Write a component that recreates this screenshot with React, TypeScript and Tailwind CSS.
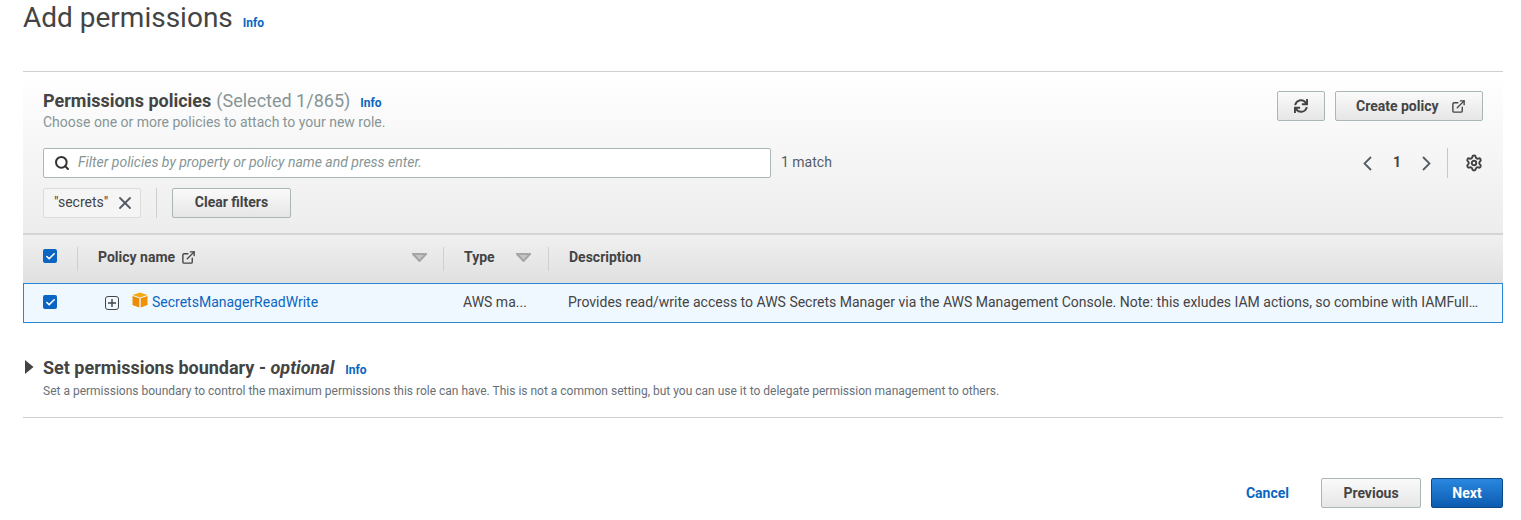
import { ExternalLink, Search, X, Settings, Check } from "lucide-react"
import { FaSync } from "react-icons/fa"

function Info() {
  return <span className="text-[12px] font-bold text-[#0a66c2] leading-none">Info</span>
}

function Checkbox() {
  return (
    <span className="w-[14px] h-[14px] rounded-[2px] bg-[#0a66c2] flex items-center justify-center">
      <Check className="w-[11px] h-[11px] text-white" strokeWidth={3.5} />
    </span>
  )
}

function SortCaret() {
  return (
    <svg width="15" height="9" viewBox="0 0 15 9">
      <path d="M1 1h13L7.5 8z" fill="#c4c4c4" stroke="#a6a6a6" strokeWidth="2" />
    </svg>
  )
}

function Cube() {
  return (
    <svg width="16" height="16" viewBox="0 0 16 16">
      <path d="M8 0.5 15.5 3 8 5.5 0.5 3z" fill="#f7a80d" />
      <path d="M0.5 4 7.3 6.3V15.5L0.5 13z" fill="#ec8b08" />
      <path d="M15.5 4 8.7 6.3V15.5L15.5 13z" fill="#f29100" />
    </svg>
  )
}

function Chevron({ d }: { d: string }) {
  return (
    <svg width="9" height="15" viewBox="0 0 9 15">
      <path d={d} fill="none" stroke="#545b64" strokeWidth="1.8" />
    </svg>
  )
}

export default function App() {
  const btn = "h-[30px] rounded-[2px] border border-[#aab7b8] bg-gradient-to-b from-[#fafafa] to-[#e6e6e6] text-[14px] font-bold text-[#444] flex items-center justify-center"

  return (
    <div className="h-[520px] w-[1521px] overflow-hidden bg-white pl-[23px] pr-[18px] text-[#444] font-['Roboto',sans-serif]">
      {/* Page title */}
      <div className="h-[71px] flex items-start gap-[10px]">
        <h1 className="text-[28px] leading-[36px] text-[#444]">Add permissions</h1>
        <span className="mt-[10px]"><Info /></span>
      </div>

      {/* Policies panel */}
      <div className="border-t border-[#cfcfcf]">
        <div className="h-[161px] bg-gradient-to-b from-white to-[#ededed] px-[20px] pt-[19px]">
          <div className="flex justify-between h-[57px]">
            <div>
              <div className="flex items-center h-[20px] -mt-px">
                <span className="text-[18px] font-bold text-[#444]">Permissions policies</span>
                <span className="text-[18px] text-[#879596] ml-[5px]">(Selected 1/865)</span>
                <span className="ml-[10px] mt-[3px]"><Info /></span>
              </div>
              <p className="text-[14px] leading-[20px] text-[#879596] mt-[2px]">Choose one or more policies to attach to your new role.</p>
            </div>
            <div className="flex gap-[10px]">
              <button className={`${btn} w-[48px]`}>
                <FaSync className="w-[14px] h-[14px]" />
              </button>
              <button className={`${btn} w-[148px] !justify-start pl-[20px] gap-[12px]`}>
                Create policy
                <ExternalLink className="w-[15px] h-[15px]" strokeWidth={2.2} />
              </button>
            </div>
          </div>

          <div className="flex items-center h-[30px]">
            <div className="w-[728px] h-[30px] rounded-[2px] border border-[#aab7b8] bg-white flex items-center pl-[10px] gap-[8px]">
              <Search className="w-[16px] h-[16px] text-[#333]" strokeWidth={3} />
              <span className="text-[14px] italic text-[#879596] mb-[1px]">Filter policies by property or policy name and press enter.</span>
            </div>
            <span className="text-[14px] text-[#545b64] ml-[10px] mb-[2px]">1 match</span>
            <div className="ml-auto flex items-center">
              <Chevron d="M8 1 1.5 7.5 8 14" />
              <span className="text-[14px] font-bold w-[50px] text-center text-[#444] mb-[1px]">1</span>
              <Chevron d="M1 1 7.5 7.5 1 14" />
              <span className="w-px h-[30px] bg-[#c8c8c8] ml-[16px] mr-[17px]" />
              <Settings className="w-[18px] h-[18px] text-[#444]" strokeWidth={2.6} />
            </div>
          </div>

          <div className="flex items-center mt-[10px] h-[30px]">
            <div className="h-[30px] w-[98px] rounded-[2px] border border-[#dcdcdc] bg-[#f5f5f5] flex items-center pl-[10px] justify-between pr-[5px]">
              <span className="text-[14px] text-[#444] mb-[1px]">"secrets"</span>
              <X className="w-[20px] h-[20px] text-[#545b64]" strokeWidth={2.2} />
            </div>
            <span className="w-px h-[30px] bg-[#cfcfcf] mx-[15px]" />
            <button className={`${btn} w-[119px] pb-[2px]`}>Clear filters</button>
          </div>
        </div>

        {/* Table header */}
        <div className="h-[50px] border-t-2 border-[#d5d5d5] bg-gradient-to-b from-[#f0f0f0] to-[#e0e0e0] flex items-center text-[14px] font-bold text-[#444]">
          <div className="w-[55px] pl-[20px] pb-[6px] flex items-center h-[24px] border-r border-[#cfcfcf]"><Checkbox /></div>
          <div className="w-[366px] pl-[20px] pr-[16px] pb-[4px] flex items-center justify-between h-[24px] border-r border-[#cfcfcf]">
            <span className="flex items-center gap-[6px]">
              Policy name
              <ExternalLink className="w-[15px] h-[15px]" strokeWidth={2.2} />
            </span>
            <SortCaret />
          </div>
          <div className="w-[105px] pl-[20px] pr-[17px] pb-[4px] flex items-center justify-between h-[24px] border-r border-[#cfcfcf]">
            Type
            <SortCaret />
          </div>
          <div className="pl-[20px] pb-[4px]">Description</div>
        </div>

        {/* Selected row */}
        <div className="h-[40px] border border-[#2b86d6] bg-[#f0f8ff] flex items-center text-[14px] pb-[2px]">
          <div className="w-[53px] pl-[19px]"><Checkbox /></div>
          <div className="w-[367px] pl-[28px] flex items-center">
            <span className="w-[14px] h-[14px] rounded-[3px] border border-[#444] flex items-center justify-center mr-[13px] mt-[1px]">
              <svg width="8" height="8" viewBox="0 0 8 8"><path d="M4 0v8M0 4h8" stroke="#444" strokeWidth="1.4" /></svg>
            </span>
            <span className="mb-[4px] mr-[4px]"><Cube /></span>
            <span className="text-[#0a66c2]">SecretsManagerReadWrite</span>
          </div>
          <div className="w-[105px] pl-[19px] text-[#444]">AWS ma...</div>
          <div className="flex-1 min-w-0 pl-[19px] pr-[24px] truncate text-[#444]">
            Provides read/write access to AWS Secrets Manager via the AWS Management Console. Note: this exludes IAM actions, so combine with IAMFullAccess if you need IAM integration.
          </div>
        </div>
      </div>

      {/* Boundary section */}
      <div className="h-[95px] border-b border-[#cfcfcf] pt-[33px]">
        <div className="flex items-center h-[22px]">
          <svg width="10" height="14" viewBox="0 0 10 14" className="mr-[9px] ml-[1px]"><path d="M1 0v14l8.5-7z" fill="#444" /></svg>
          <span className="text-[18px] font-bold text-[#444]">Set permissions boundary - <em className="font-bold">optional</em></span>
          <span className="ml-[11px] mt-[3px]"><Info /></span>
        </div>
        <p className="pl-[20px] text-[12px] leading-[16px] text-[#687078] mt-[5px]">
          Set a permissions boundary to control the maximum permissions this role can have. This is not a common setting, but you can use it to delegate permission management to others.
        </p>
      </div>

      {/* Footer */}
      <div className="flex items-center justify-end mt-[60px]">
        <span className="text-[14px] font-bold text-[#0a66c2] mr-[32px]">Cancel</span>
        <button className={`${btn} w-[100px] mr-[10px]`}>Previous</button>
        <button className="h-[30px] w-[72px] rounded-[2px] border border-[#0a4a87] bg-gradient-to-b from-[#2a87e0] to-[#0b5cb0] text-[14px] font-bold text-white">Next</button>
      </div>
    </div>
  )
}
